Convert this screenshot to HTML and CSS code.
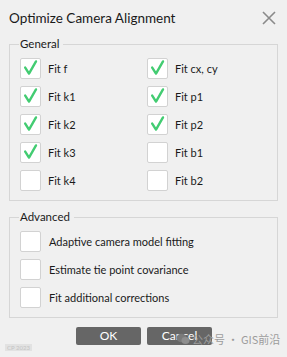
FILE: index.html
```html
<!doctype html>
<html>
	<head>
	<meta charset="utf-8">
	<title>Optimize Camera Alignment</title>
	<link rel="stylesheet" href="styles.css">
	</head>

	<body>
    <div class="dialog">
      <div class="head">
        <span class="title">Optimize Camera Alignment</span>
        <svg class="close" width="14" height="14" viewBox="0 0 14 14">
          <path d="M1 1 L13 13 M13 1 L1 13" stroke="#8a8a8a" stroke-width="1.6" fill="none"/>
        </svg>
      </div>

      <fieldset class="group">
        <legend>General</legend>
        <div class="grid">
          <label class="opt"><span class="box on"></span>Fit f</label>
          <label class="opt"><span class="box on"></span>Fit cx, cy</label>
          <label class="opt"><span class="box on"></span>Fit k1</label>
          <label class="opt"><span class="box on"></span>Fit p1</label>
          <label class="opt"><span class="box on"></span>Fit k2</label>
          <label class="opt"><span class="box on"></span>Fit p2</label>
          <label class="opt"><span class="box on"></span>Fit k3</label>
          <label class="opt"><span class="box"></span>Fit b1</label>
          <label class="opt"><span class="box"></span>Fit k4</label>
          <label class="opt"><span class="box"></span>Fit b2</label>
        </div>
      </fieldset>

      <fieldset class="group adv">
        <legend>Advanced</legend>
        <div class="list">
          <label class="opt"><span class="box"></span>Adaptive camera model fitting</label>
          <label class="opt"><span class="box"></span>Estimate tie point covariance</label>
          <label class="opt"><span class="box"></span>Fit additional corrections</label>
        </div>
      </fieldset>

      <div class="buttons">
        <button class="btn">OK</button>
        <button class="btn">Cancel</button>
      </div>

      <div class="mark">
        <svg width="14" height="12" viewBox="0 0 14 12">
          <ellipse cx="5.5" cy="5" rx="5" ry="4.2" fill="#7a7a7a"/>
          <ellipse cx="9.5" cy="7.5" rx="4" ry="3.4" fill="#8e8e8e"/>
        </svg>
        <span>公众号 · GIS前沿</span>
      </div>
      <div class="tag">CP 2023</div>
    </div>
</body>
</html>
```

FILE: styles.css
```css
body {
	margin: 0;
	background: #f0f0f0;
	font-family: "Lato", "Noto Sans CJK SC", sans-serif;
	color: #1a1a1a;
}
.dialog {
	position: relative;
	width: 287px;
	height: 357px;
	overflow: hidden;
}
.head {
	height: 36px;
	display: flex;
	align-items: center;
	justify-content: space-between;
	padding: 0 11px 0 9px;
}
.title {
	font-size: 13.5px;
	padding-bottom: 1px;
}
.close {
	display: block;
}
.group {
	margin: 0 9px;
	padding: 6px 10px 9px 10px;
	border: 1px solid #d6d6d6;
	min-width: 0;
}
.group legend {
	font-size: 11.5px;
	padding: 0 4px 0 1px;
	margin-left: -1px;
	line-height: 16px;
}
.adv {
	margin-top: 8px;
	padding-bottom: 9px;
}
.grid {
	display: grid;
	grid-template-columns: 127px 1fr;
	row-gap: 7px;
}
.list {
	display: flex;
	flex-direction: column;
	gap: 7px;
}
.opt {
	display: flex;
	align-items: center;
	font-size: 11px;
	height: 21px;
}
.box {
	width: 19px;
	height: 19px;
	border: 1px solid #d2d2d2;
	border-radius: 2px;
	background: #ffffff;
	margin-right: 7px;
	flex: none;
}
.adv .box {
	margin-right: 8px;
}
.box.on {
	background: #ffffff url("data:image/svg+xml;utf8,<svg xmlns='http://www.w3.org/2000/svg' width='19' height='19' viewBox='0 0 19 19'><path d='M4.2 8.6 L8 14.6 L15 2.4' stroke='%2343cc72' stroke-width='2.4' fill='none' stroke-linecap='round' stroke-linejoin='round'/></svg>") no-repeat;
}
.buttons {
	display: flex;
	justify-content: center;
	gap: 6px;
	margin-top: 9px;
	padding-left: 1px;
}
.btn {
	width: 65px;
	height: 18px;
	border: none;
	border-radius: 2px;
	background: #666666;
	color: #ffffff;
	font-family: "Lato", sans-serif;
	font-size: 12px;
	padding: 0;
	line-height: 18px;
}
.mark {
	position: absolute;
	left: 176px;
	top: 332px;
	display: flex;
	align-items: center;
	gap: 2px;
	color: #9c9c9c;
	font-size: 11px;
	white-space: nowrap;
}
.mark span {
	font-family: "Noto Sans CJK SC", sans-serif;
	line-height: 14px;
}
.tag {
	position: absolute;
	left: 5px;
	top: 344px;
	font-size: 6px;
	line-height: 7px;
	color: #c4c4c4;
	background: #e2e2e2;
	padding: 0 2px;
}
```
